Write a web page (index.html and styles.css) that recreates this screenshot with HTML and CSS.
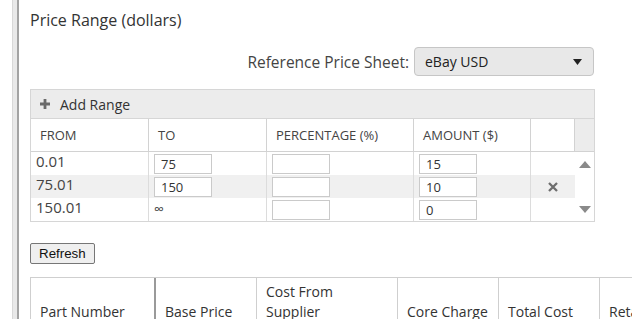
FILE: index.html
```html
<!DOCTYPE html>
<html>
<head>
<meta charset="utf-8">
<link rel="stylesheet" href="styles.css">
</head>
<body>
<div class="page">
  <div class="rail"></div>
  <div class="rail2"></div>
  <main class="content">
    <h2 class="title">Price Range (dollars)</h2>
    <div class="sheet-row">
      <span class="sheet-label">Reference Price Sheet:</span>
      <div class="select">
        <span>eBay USD</span>
        <svg class="caret" width="9" height="6" viewBox="0 0 9 6"><path d="M0 0H9L4.5 6Z" fill="#222"/></svg>
      </div>
    </div>
    <div class="ranges">
      <div class="ranges-bar">
        <svg class="plus" width="10" height="10" viewBox="0 0 10 10"><path d="M3.6 0H6.4V3.6H10V6.4H6.4V10H3.6V6.4H0V3.6H3.6Z" fill="#6b6b6b"/></svg>
        <span>Add Range</span>
      </div>
      <table class="range-table">
        <colgroup>
          <col class="c1"><col class="c2"><col class="c3"><col class="c4"><col class="c5"><col class="c6">
        </colgroup>
        <thead>
          <tr>
            <th>FROM</th>
            <th>TO</th>
            <th>PERCENTAGE (%)</th>
            <th>AMOUNT ($)</th>
            <th></th>
            <th class="sb-head"></th>
          </tr>
        </thead>
        <tbody>
          <tr>
            <td class="from">0.01</td>
            <td><input class="field" value="75"></td>
            <td><input class="field" value=""></td>
            <td><input class="field" value="15"></td>
            <td class="act"></td>
            <td class="sb" rowspan="3">
              <div class="sb-inner">
                <svg width="12" height="7" viewBox="0 0 12 7"><path d="M0 7L6 0L12 7Z" fill="#8a8a8a"/></svg>
                <svg width="12" height="7" viewBox="0 0 12 7"><path d="M0 0H12L6 7Z" fill="#8a8a8a"/></svg>
              </div>
            </td>
          </tr>
          <tr class="alt">
            <td class="from">75.01</td>
            <td><input class="field" value="150"></td>
            <td><input class="field" value=""></td>
            <td><input class="field" value="10"></td>
            <td class="act">
              <svg width="10" height="10" viewBox="0 0 10 10"><path d="M1 1L9 9M9 1L1 9" stroke="#6e6e6e" stroke-width="2.3"/></svg>
            </td>
          </tr>
          <tr>
            <td class="from">150.01</td>
            <td class="inf">∞</td>
            <td><input class="field" value=""></td>
            <td><input class="field" value="0"></td>
            <td class="act"></td>
          </tr>
        </tbody>
      </table>
    </div>
    <button class="refresh">Refresh</button>
    <table class="parts">
      <colgroup>
        <col class="p1"><col class="p2"><col class="p3"><col class="p4"><col class="p5"><col class="p6">
      </colgroup>
      <thead>
        <tr>
          <th class="first">Part Number</th>
          <th>Base Price</th>
          <th>Cost From Supplier</th>
          <th>Core Charge</th>
          <th>Total Cost</th>
          <th>Retail Price</th>
        </tr>
      </thead>
    </table>
  </main>
</div>
</body>
</html>
```

FILE: styles.css
```css
html, body {
  margin: 0;
  padding: 0;
  overflow: hidden;
  background: #fff;
}
body {
  font-family: "Open Sans", "Liberation Sans", sans-serif;
  color: #333;
}
.page {
  display: flex;
  min-height: 319px;
}
.rail {
  width: 12px;
  flex: none;
  background: #fff;
  border-right: 1px solid #d8d8d8;
}
.rail2 {
  width: 4px;
  flex: none;
  background: #e9e9e9;
  border-right: 2px solid #a3a3a3;
}
.content {
  flex: 1;
  padding: 8px 0 0 11px;
  min-width: 0;
}
.title {
  margin: 0;
  font-size: 16px;
  font-weight: 400;
  line-height: 24px;
  color: #333;
}
.sheet-row {
  display: flex;
  justify-content: flex-end;
  align-items: center;
  width: 564px;
  margin-top: 15px;
  gap: 5px;
}
.sheet-label {
  font-size: 15.5px;
  color: #444;
}
.select {
  box-sizing: border-box;
  width: 180px;
  height: 29px;
  background: #e8e8e8;
  border: 1px solid #c6c6c6;
  border-radius: 4px;
  display: flex;
  align-items: center;
  justify-content: space-between;
  padding: 0 11px 0 10px;
  font-size: 14px;
  color: #222;
}
.ranges {
  width: 563px;
  margin-top: 13px;
  border: 1px solid #d6d6d6;
}
.ranges-bar {
  height: 28px;
  background: #ececec;
  border-bottom: 1px solid #d6d6d6;
  display: flex;
  align-items: center;
  padding-left: 9px;
  gap: 10px;
  font-size: 14px;
  color: #333;
}
.range-table {
  width: 563px;
  table-layout: fixed;
  border-collapse: separate;
  border-spacing: 0;
}
.c1 { width: 118px; }
.c2 { width: 118px; }
.c3 { width: 147px; }
.c4 { width: 117px; }
.c5 { width: 44px; }
.c6 { width: 19px; }
.range-table th {
  height: 32px;
  padding: 0 0 0 9px;
  text-align: left;
  font-weight: 400;
  font-size: 13px;
  color: #444;
  border-right: 1px solid #d2d2d2;
  border-bottom: 1px solid #d2d2d2;
}
.range-table th.sb-head {
  border-right: 0;
  background: #ececec;
}
.range-table td {
  height: 23px;
  padding: 0 0 0 5px;
  line-height: 20px;
  border-right: 1px solid #dcdcdc;
  font-size: 15px;
  color: #444;
  vertical-align: middle;
}
.range-table td.from {
  height: 19px;
  line-height: 17px;
  padding-bottom: 4px;
}
.range-table td.act {
  border-right: 0;
  padding: 0;
  text-align: center;
  line-height: 0;
}
.range-table td.sb {
  border-right: 0;
  padding: 0;
  background: #fff;
  vertical-align: top;
}
.sb-inner {
  height: 69px;
  box-sizing: border-box;
  display: flex;
  flex-direction: column;
  justify-content: space-between;
  align-items: center;
  padding: 9px 0 8px 1px;
}
.range-table tr.alt td {
  background: #f0f0f0;
}
.range-table td.inf {
  height: 20px;
  font-size: 14px;
  line-height: 17px;
  padding: 0 0 3px 5px;
}
.field {
  box-sizing: border-box;
  width: 58px;
  height: 20px;
  margin: 0;
  border: 1px solid #cacaca;
  border-radius: 0;
  background: #fff;
  padding: 0 0 0 6px;
  font-family: "Open Sans", "Liberation Sans", sans-serif;
  font-size: 13px;
  color: #333;
  display: block;
}
.refresh {
  display: block;
  margin-top: 21px;
  height: 21px;
  padding: 0 8px;
  font-family: "Liberation Sans", Arial, sans-serif;
  font-size: 13.33px;
  color: #111;
  background: #efefef;
  border: 1px solid #767676;
  border-radius: 2px;
}
.parts {
  margin-top: 13px;
  table-layout: fixed;
  border-collapse: separate;
  border-spacing: 0;
  width: 692px;
  border-top: 1px solid #cfcfcf;
  border-left: 1px solid #cfcfcf;
}
.p1 { width: 125px; }
.p2 { width: 101px; }
.p3 { width: 141px; }
.p4 { width: 101px; }
.p5 { width: 101px; }
.p6 { width: 123px; }
.parts th {
  text-align: left;
  font-weight: 400;
  font-size: 14px;
  line-height: 20px;
  color: #333;
  vertical-align: bottom;
  padding: 4px 8px 14px 9px;
  border-right: 1px solid #cfcfcf;
}
.parts th.first {
  border-right: 2px solid #9a9a9a;
}
```
